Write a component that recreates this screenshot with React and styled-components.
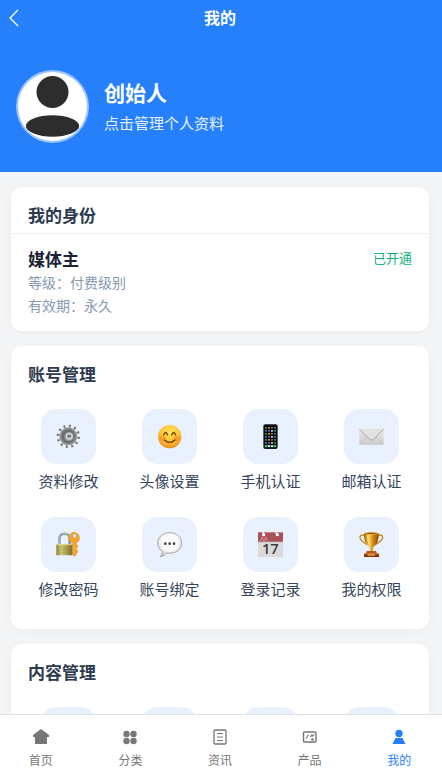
import styled, { createGlobalStyle } from "styled-components";

const GlobalStyle = createGlobalStyle`
  * {
    box-sizing: border-box;
  }

  body {
    margin: 0;
    background: #f4f5f7;
    font-family: "Noto Sans CJK SC", "Noto Sans", sans-serif;
  }

  button {
    padding: 0;
    border: 0;
    background: none;
    font-family: inherit;
    cursor: pointer;
  }
`;

const GearIcon = () => (
  <svg viewBox="0 0 75 75">
    <defs>
      <radialGradient id="gear">
        <stop offset="0.3" stopColor="#7d8082" />
        <stop offset="0.7" stopColor="#66696b" />
        <stop offset="1" stopColor="#8b8e90" />
      </radialGradient>
    </defs>
    {[...Array(12)].map((_, i) => (
      <g key={i} transform={`rotate(${i * 30 + 8} 37 37)`}>
        <path d="M34 14L35 4h5l1 10z" fill="#9a9d9f" />
        <path d="M34 6V2h6v4z" fill="#6c6462" />
      </g>
    ))}
    <circle cx="37" cy="37" r="27" fill="#a0a3a5" />
    <circle cx="37" cy="37" r="24" fill="url(#gear)" />
    <circle cx="39" cy="38" r="14" fill="#8e9698" />
    <circle cx="40" cy="37" r="11" fill="#c9cecf" />
    <circle cx="40" cy="37" r="5" fill="#5b5751" />
    <circle cx="41" cy="39" r="2" fill="#e6dfcf" />
  </svg>
);

const SmileIcon = () => (
  <svg viewBox="0 0 75 75">
    <defs>
      <radialGradient id="smile" cx="0.5" cy="0.3" r="0.7">
        <stop offset="0" stopColor="#ffe45a" />
        <stop offset="0.6" stopColor="#fdc231" />
        <stop offset="1" stopColor="#ef8c1c" />
      </radialGradient>
    </defs>
    <circle cx="38" cy="38" r="35" fill="url(#smile)" />
    <ellipse cx="17" cy="43" rx="10" ry="8" fill="#f4722b" opacity="0.45" />
    <ellipse cx="59" cy="43" rx="10" ry="8" fill="#f4722b" opacity="0.45" />
    <g fill="none" stroke="#6f3c0d" strokeWidth="4" strokeLinecap="round">
      <path d="M20 33q6-15 12 0M44 33q6-15 12 0" />
      <path d="M22 48q16 14 32 0" />
    </g>
  </svg>
);

const PHONE_COLORS = ["#35b558", "#e8edf2", "#8d5bb8", "#318ee0", "#e15a45", "#eda437"];

const PhoneIcon = () => (
  <svg viewBox="0 0 75 75">
    <rect x="16" y="1" width="43" height="74" rx="6" fill="#17191c" />
    <rect x="19" y="4" width="37" height="67" rx="3" fill="#050709" />
    {[...Array(24)].map((_, i) => (
      <rect
        key={i}
        x={21 + (i % 4) * 9}
        y={9 + Math.floor(i / 4) * 9}
        width="6"
        height="5"
        rx="1"
        fill={PHONE_COLORS[(i * 5 + Math.floor(i / 4)) % 6]}
        opacity="0.85"
      />
    ))}
    <path d="M20 63h35v7H20z" fill="#315c59" />
    <path d="M21 64h6v5h-6zM48 64h6v5h-6z" fill="#4bd166" />
    <path d="M30 64h6v5h-6zM39 64h6v5h-6z" fill="#d5eee9" />
  </svg>
);

const MailIcon = () => (
  <svg viewBox="0 0 75 75">
    <defs>
      <linearGradient id="mail" x2="0" y2="1">
        <stop offset="0" stopColor="#e6e6e6" />
        <stop offset="1" stopColor="#cfcfcf" />
      </linearGradient>
    </defs>
    <rect x="1" y="14" width="73" height="47" rx="2" fill="url(#mail)" />
    <path d="M2 60l27-27M73 60L46 33" stroke="#b9b9b9" strokeWidth="2" />
    <path d="M2 15h71L43 46q-5 5-11 0z" fill="#e2e2e2" />
    <path d="M2 16l30 30q6 5 11 0l30-30" fill="none" stroke="#a4a4a4" strokeWidth="3" />
    <path d="M2 61h71" stroke="#bcbcbc" strokeWidth="2" />
  </svg>
);

const LockIcon = () => (
  <svg viewBox="0 0 75 75">
    <defs>
      <linearGradient id="lock">
        <stop offset="0" stopColor="#8d8238" />
        <stop offset="0.3" stopColor="#d2ca78" />
        <stop offset="0.6" stopColor="#aea452" />
        <stop offset="1" stopColor="#776d2c" />
      </linearGradient>
    </defs>
    <path d="M10 39V23C10 9 16 5 25 5s16 5 16 18v16" fill="none" stroke="#71899a" strokeWidth="7" />
    <path d="M9 38V23C9 9 16 4 25 4s14 5 15 13" fill="none" stroke="#c3d3de" strokeWidth="3" />
    <rect x="1" y="36" width="49" height="34" rx="2" fill="url(#lock)" />
    <path d="M2 46h47M2 54h47M2 62h47" stroke="#857b35" strokeWidth="1" opacity="0.7" />
    <path d="M1 38h49" stroke="#e1d995" strokeWidth="3" />
    <path
      fill="#f5a12a"
      stroke="#d9821a"
      strokeWidth="1"
      fillRule="evenodd"
      d="M56 1a17 17 0 0 0-6 33v35l5 4 6-4v-6l4-2v-6l-4-2v-4l4-3v-6l-4-3v-4A17 17 0 0 0 56 1zm0 4a6 6 0 1 1 0 12a6 6 0 0 1 0-12z"
    />
    <path d="M54 36v32" stroke="#ffc45e" strokeWidth="2" />
  </svg>
);

const ChatIcon = () => (
  <svg viewBox="0 0 75 75">
    <defs>
      <radialGradient id="chat" cx="0.5" cy="0.4" r="0.6">
        <stop offset="0.6" stopColor="#fafafa" />
        <stop offset="1" stopColor="#c5c5c5" />
      </radialGradient>
    </defs>
    <path
      d="M38 2C18 2 2 15 2 33c0 12 6 20 14 25 1 6-2 11-7 16 9-1 16-5 20-11 27 4 45-10 45-30C74 15 58 2 38 2z"
      fill="url(#chat)"
      stroke="#a8a8a8"
      strokeWidth="3"
    />
    <circle cx="25" cy="35" r="4" fill="#444" />
    <circle cx="38" cy="35" r="4" fill="#444" />
    <circle cx="51" cy="35" r="4" fill="#444" />
  </svg>
);

const CalendarIcon = () => (
  <svg viewBox="0 0 75 75">
    <path d="M0 28h75v47H0z" fill="#dadada" />
    <path d="M0 1h75v29H0z" fill="#ab5054" />
    <path d="M0 30h75" stroke="#c9bcbc" strokeWidth="2" />
    <path d="M7 27l5-12 5 12M19 27l4-12 5 12" fill="none" stroke="#cf9294" strokeWidth="3" />
    <path d="M15 0l2 7M53 0l4 8" stroke="#f7f7f7" strokeWidth="4" />
    <circle cx="17" cy="8" r="5" fill="#fff" />
    <circle cx="58" cy="8" r="5" fill="#fff" />
    <text x="37" y="67" textAnchor="middle" fontFamily="Open Sans" fontSize="44" fontWeight="600" fill="#3c3c3c">
      17
    </text>
  </svg>
);

const TrophyIcon = () => (
  <svg viewBox="0 0 75 75">
    <defs>
      <linearGradient id="cup">
        <stop offset="0" stopColor="#a85c08" />
        <stop offset="0.35" stopColor="#ffd65a" />
        <stop offset="0.6" stopColor="#d98d14" />
        <stop offset="1" stopColor="#8d4804" />
      </linearGradient>
    </defs>
    <path
      d="M18 11C8 6 1 11 4 20c3 8 11 11 21 18M56 11c10-5 17 0 14 9-3 8-11 11-21 18"
      fill="none"
      stroke="#c5861e"
      strokeWidth="4"
    />
    <path d="M15 3h44c1 22-5 35-15 41-3 4-3 8-2 13H32c1-5 1-9-2-13C20 38 14 25 15 3z" fill="url(#cup)" />
    <ellipse cx="37" cy="4" rx="22" ry="4" fill="#e8ac35" />
    <ellipse cx="37" cy="4" rx="17" ry="2" fill="#8d510c" />
    <path d="M26 10c0 14 3 23 8 29" fill="none" stroke="#ffea96" strokeWidth="3" />
    <path d="M23 57h28l3 8H20z" fill="#bd5c18" />
    <path d="M15 65h45v10H15z" fill="#843410" />
    <path d="M26 65h22v6H26z" fill="#e8aa38" />
    <path d="M16 66h42" stroke="#d2742c" strokeWidth="2" />
  </svg>
);

const HomeTab = () => (
  <svg viewBox="0 0 18 18">
    <path d="M9 1l8 6v2h-2v7H3V9H1V7z" fill="currentColor" />
  </svg>
);

const CategoryTab = () => (
  <svg viewBox="0 0 18 18" fill="currentColor">
    <circle cx="5.5" cy="6" r="3.2" />
    <circle cx="12.5" cy="6" r="3.2" />
    <circle cx="5.5" cy="13" r="3.2" />
    <circle cx="12.5" cy="13" r="3.2" />
  </svg>
);

const NewsTab = () => (
  <svg viewBox="0 0 18 18" fill="none" stroke="currentColor">
    <rect x="3" y="2" width="12" height="14" rx="1" strokeWidth="1.3" />
    <path d="M6 5.5h6M6 9h6M6 12.5h6" />
  </svg>
);

const ProductTab = () => (
  <svg viewBox="0 0 18 18" fill="none" stroke="currentColor">
    <rect x="2.5" y="4" width="12.5" height="10" rx="1" strokeWidth="1.4" />
    <path d="M5 10.5l2-3h1M9.5 9L11 6.5M11 8.5l2-2" strokeWidth="1.2" />
    <circle cx="11.5" cy="11.5" r="1.3" fill="currentColor" stroke="none" />
  </svg>
);

const MineTab = () => (
  <svg viewBox="0 0 18 18" fill="currentColor">
    <circle cx="9" cy="5.5" r="3.7" />
    <path d="M5.5 10h7l3 6h-13z" />
  </svg>
);

const accountItems = [
  { label: "资料修改", icon: <GearIcon /> },
  { label: "头像设置", icon: <SmileIcon /> },
  { label: "手机认证", icon: <PhoneIcon /> },
  { label: "邮箱认证", icon: <MailIcon /> },
  { label: "修改密码", icon: <LockIcon /> },
  { label: "账号绑定", icon: <ChatIcon /> },
  { label: "登录记录", icon: <CalendarIcon /> },
  { label: "我的权限", icon: <TrophyIcon /> },
];

const contentItems = ["发布", "文章", "收藏", "评论"];

const tabs = [
  { label: "首页", icon: <HomeTab /> },
  { label: "分类", icon: <CategoryTab /> },
  { label: "资讯", icon: <NewsTab /> },
  { label: "产品", icon: <ProductTab /> },
  { label: "我的", icon: <MineTab />, active: true },
];

export default function App() {
  return (
    <Page>
      <GlobalStyle />
      <Content>
        <Header>
          <TitleBar>
            <BackButton aria-label="返回">
              <svg width="12" height="18" viewBox="0 0 12 18" fill="none" stroke="#fff" strokeWidth="1.3">
                <path d="M10 1L2 9l8 8" />
              </svg>
            </BackButton>
            <Title>我的</Title>
            <span />
          </TitleBar>
          <Profile>
            <Avatar>
              <svg viewBox="0 0 73 73">
                <circle cx="36.5" cy="36.5" r="36.5" fill="#9cc5fd" />
                <circle cx="36.5" cy="36.5" r="34.5" fill="#fff" />
                <circle cx="36.5" cy="22" r="16" fill="#2d2d2d" />
                <ellipse cx="36.5" cy="56" rx="26.7" ry="10.7" fill="#2d2d2d" />
              </svg>
            </Avatar>
            <div>
              <UserName>创始人</UserName>
              <UserHint>点击管理个人资料</UserHint>
            </div>
          </Profile>
        </Header>

        <Cards>
          <Card>
            <CardTitle $divider>我的身份</CardTitle>
            <Identity>
              <div>
                <Role>媒体主</Role>
                <Meta>等级：付费级别</Meta>
                <Meta>有效期：永久</Meta>
              </div>
              <Status>已开通</Status>
            </Identity>
          </Card>

          <Card>
            <CardTitle>账号管理</CardTitle>
            <Grid>
              {accountItems.map((item) => (
                <Item key={item.label}>
                  <Tile>{item.icon}</Tile>
                  {item.label}
                </Item>
              ))}
            </Grid>
          </Card>

          <Card>
            <CardTitle>内容管理</CardTitle>
            <Grid>
              {contentItems.map((label) => (
                <Item key={label} aria-label={label}>
                  <Tile />
                </Item>
              ))}
            </Grid>
          </Card>
        </Cards>
      </Content>

      <TabBar>
        {tabs.map((tab) => (
          <Tab key={tab.label} href="#" $active={tab.active}>
            {tab.icon}
            {tab.label}
          </Tab>
        ))}
      </TabBar>
    </Page>
  );
}

const Page = styled.div`
  display: flex;
  flex-direction: column;
  height: 100vh;
`;

const Content = styled.main`
  flex: 1;
  min-height: 0;
  overflow-y: auto;
  scrollbar-width: none;
`;

const Header = styled.header`
  padding-right: 2px;
  color: #fff;
  background: #2680fb;
`;

const TitleBar = styled.div`
  display: grid;
  grid-template-columns: 40px 1fr 40px;
  align-items: center;
  height: 36px;
`;

const BackButton = styled.button`
  display: flex;
  padding-left: 8px;
`;

const Title = styled.h1`
  margin: 0;
  padding-bottom: 2px;
  font-size: 16px;
  font-weight: 700;
  line-height: 24px;
  text-align: center;
`;

const Profile = styled.div`
  display: flex;
  align-items: center;
  gap: 15px;
  padding: 34px 16px 29px;
`;

const Avatar = styled.div`
  width: 73px;
  height: 73px;

  svg {
    display: block;
  }
`;

const UserName = styled.h2`
  margin: 0 0 6px;
  font-size: 21px;
  font-weight: 700;
  line-height: 27px;
`;

const UserHint = styled.p`
  margin: 0;
  font-size: 15px;
  line-height: 22px;
  opacity: 0.9;
`;

const Cards = styled.div`
  display: flex;
  flex-direction: column;
  gap: 15px;
  padding: 15px 13px 15px 11px;
`;

const Card = styled.section`
  background: #fff;
  border-radius: 11px;
  box-shadow: 0 2px 12px rgba(0, 0, 0, 0.04);
`;

const CardTitle = styled.h3`
  margin: 0;
  padding: 16px 17px 6px;
  border-bottom: ${(props) => (props.$divider ? "1px solid #eff0f3" : "0")};
  font-size: 17px;
  font-weight: 700;
  line-height: 24px;
  color: #2d3a4e;
`;

const Identity = styled.div`
  display: flex;
  justify-content: space-between;
  align-items: flex-start;
  padding: 12px 17px 14px;
`;

const Role = styled.h4`
  margin: 0;
  font-size: 17px;
  font-weight: 700;
  line-height: 25px;
  color: #1a2334;
`;

const Meta = styled.p`
  margin: 0;
  font-size: 14px;
  line-height: 23px;
  color: #8798b2;
`;

const Status = styled.span`
  font-size: 13px;
  line-height: 23px;
  color: #11b078;
`;

const Grid = styled.div`
  display: grid;
  grid-template-columns: repeat(4, 1fr);
  gap: 25px 20px;
  padding: 17px 17px 29px;
`;

const Item = styled.button`
  display: flex;
  flex-direction: column;
  align-items: center;
  gap: 6px;
  font-size: 15px;
  line-height: 22px;
  color: #36455b;
`;

const Tile = styled.span`
  display: flex;
  align-items: center;
  justify-content: center;
  width: 55px;
  height: 55px;
  border-radius: 15px;
  background: #e9f1fe;

  svg {
    width: 25px;
    height: 25px;
  }
`;

const TabBar = styled.nav`
  display: grid;
  grid-template-columns: repeat(5, 1fr);
  gap: 8px;
  height: 61px;
  padding: 13px 2px 0 0;
  border-top: 1px solid #dfe0e2;
  background: #fff;
`;

const Tab = styled.a`
  display: flex;
  flex-direction: column;
  align-items: center;
  gap: 5px;
  font-size: 12px;
  line-height: 18px;
  text-decoration: none;
  color: ${(props) => (props.$active ? "#2680fb" : "#777")};

  svg {
    width: 18px;
    height: 18px;
  }
`;
